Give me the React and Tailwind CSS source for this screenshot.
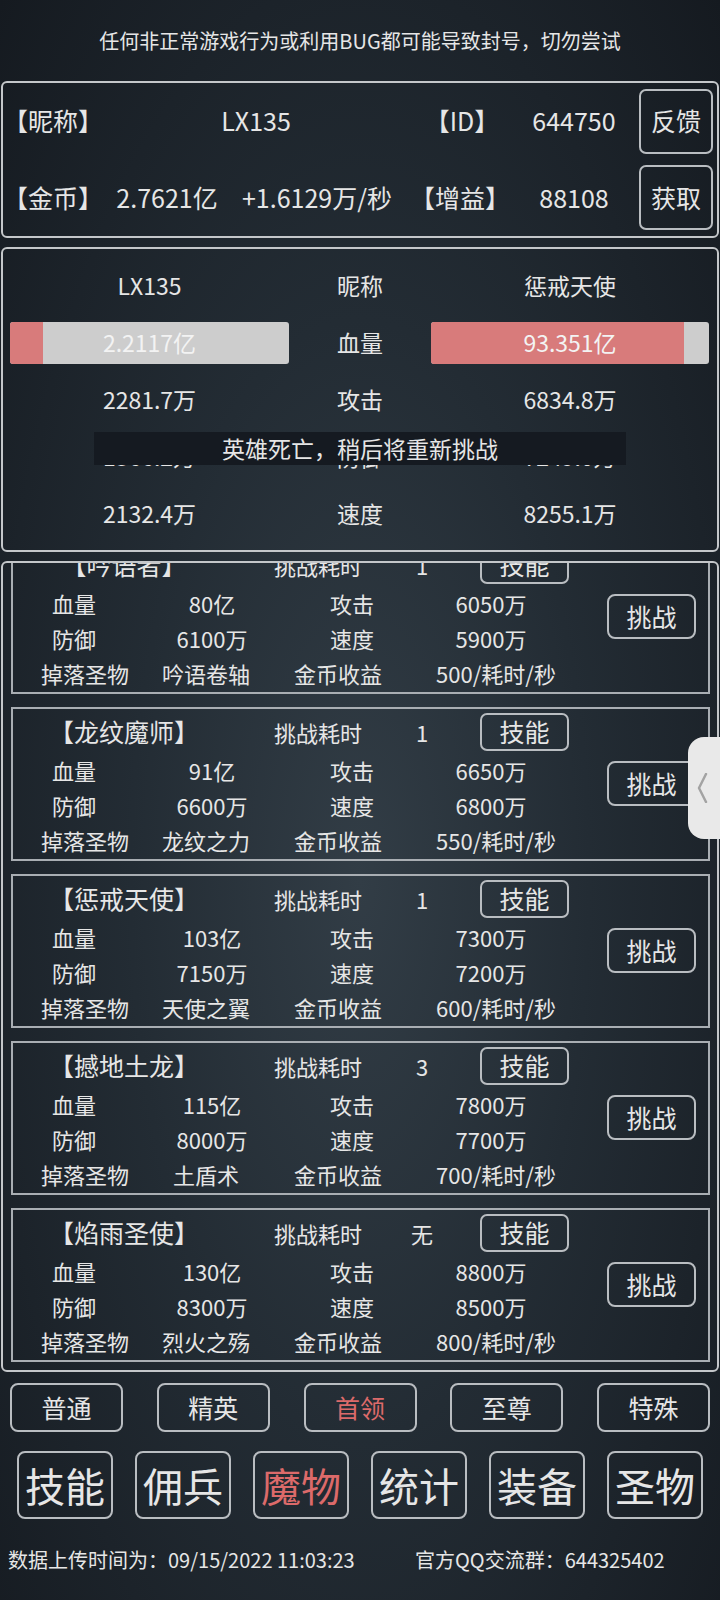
import React from 'react';

const monsters = [
  { name: '【吟语者】', time: '1', hp: '80亿', atk: '6050万', def: '6100万', spd: '5900万', drop: '吟语卷轴', gold: '500/耗时/秒' },
  { name: '【龙纹魔师】', time: '1', hp: '91亿', atk: '6650万', def: '6600万', spd: '6800万', drop: '龙纹之力', gold: '550/耗时/秒' },
  { name: '【惩戒天使】', time: '1', hp: '103亿', atk: '7300万', def: '7150万', spd: '7200万', drop: '天使之翼', gold: '600/耗时/秒' },
  { name: '【撼地土龙】', time: '3', hp: '115亿', atk: '7800万', def: '8000万', spd: '7700万', drop: '土盾术', gold: '700/耗时/秒' },
  { name: '【焰雨圣使】', time: '无', hp: '130亿', atk: '8800万', def: '8300万', spd: '8500万', drop: '烈火之殇', gold: '800/耗时/秒' },
];

const tabs = ['普通', '精英', '首领', '至尊', '特殊'];
const navs = ['技能', '佣兵', '魔物', '统计', '装备', '圣物'];

const MonsterCard = ({ m }) => (
  <div className="h-[154px] shrink-0 border-2 border-[#a9aeb3] flex pt-[2px]">
    <div className="flex flex-col">
      <div className="h-[42px] flex items-center">
        <div className="w-[222px] text-center text-[25px]">{m.name}</div>
        <div className="w-[166px] text-center">挑战耗时</div>
        <div className="w-[42px] text-center">{m.time}</div>
        <div className="ml-[37px] w-[89px] h-[38px] border-2 border-[#b9bdc1] rounded-[7px] flex items-center justify-center text-[25px]">技能</div>
      </div>
      <div className="h-[35px] flex items-center">
        <div className="w-[122px] text-center">血量</div>
        <div className="w-[154px] text-center">{m.hp}</div>
        <div className="w-[126px] text-center">攻击</div>
        <div className="w-[152px] text-center">{m.atk}</div>
      </div>
      <div className="h-[35px] flex items-center">
        <div className="w-[122px] text-center">防御</div>
        <div className="w-[154px] text-center">{m.def}</div>
        <div className="w-[126px] text-center">速度</div>
        <div className="w-[152px] text-center">{m.spd}</div>
      </div>
      <div className="h-[35px] flex items-center">
        <div className="w-[144px] text-center">掉落圣物</div>
        <div className="w-[98px] text-center">{m.drop}</div>
        <div className="w-[166px] text-center">金币收益</div>
        <div className="w-[150px] text-center">{m.gold}</div>
      </div>
    </div>
    <div className="ml-auto mr-[12px] mt-[50px]">
      <div className="w-[89px] h-[45px] border-2 border-[#b9bdc1] rounded-[8px] flex items-center justify-center text-[25px]">挑战</div>
    </div>
  </div>
);

const HpBar = ({ value, pct }) => (
  <div className="relative w-full h-[42px] bg-[#cdcdcd] rounded-[3px] overflow-hidden">
    <div className="absolute inset-y-0 left-0 bg-[#d87b7b]" style={{ width: pct + '%' }} />
    <div className="relative h-full flex items-center justify-center text-[#f3f3f3]">{value}</div>
  </div>
);

export default function App() {
  return (
    <div className="relative w-[720px] h-[1600px] overflow-hidden text-[#e6e6e6] font-['Noto_Sans_CJK_SC','Noto_Sans',sans-serif] bg-[radial-gradient(ellipse_at_50%_55%,#323d46_0%,#232c34_45%,#151a20_100%)]">
      {/* notice */}
      <div className="h-[81px] flex items-center justify-center text-[20px]">任何非正常游戏行为或利用BUG都可能导致封号，切勿尝试</div>

      {/* player info */}
      <div className="mx-[1px] h-[157px] border-2 border-[#c4c7ca] rounded-[6px] text-[25px]">
        <div className="h-[76px] flex items-center">
          <div className="w-[97px]">【昵称】</div>
          <div className="w-[312px] text-center">LX135</div>
          <div className="w-[100px] text-center">【ID】</div>
          <div className="w-[124px] text-center">644750</div>
          <div className="ml-auto mr-[4px] w-[74px] h-[65px] border-2 border-[#b9bdc1] rounded-[7px] flex items-center justify-center">反馈</div>
        </div>
        <div className="h-[77px] flex items-center">
          <div className="w-[97px]">【金币】</div>
          <div className="w-[134px] text-center">2.7621亿</div>
          <div className="w-[166px] text-center">+1.6129万/秒</div>
          <div className="w-[120px] text-center">【增益】</div>
          <div className="w-[108px] text-center">88108</div>
          <div className="ml-auto mr-[4px] w-[74px] h-[65px] border-2 border-[#b9bdc1] rounded-[7px] flex items-center justify-center">获取</div>
        </div>
      </div>

      {/* battle */}
      <div className="relative mt-[9px] mx-[1px] h-[305px] border-2 border-[#c4c7ca] rounded-[6px] pt-[8px] pl-[7px] pr-[8px] text-[23px]">
        <div className="h-[57px] flex items-center">
          <div className="w-[279px] text-center">LX135</div>
          <div className="w-[142px] text-center">昵称</div>
          <div className="flex-1 text-center">惩戒天使</div>
        </div>
        <div className="h-[57px] flex items-center">
          <div className="w-[279px]"><HpBar value="2.2117亿" pct={12} /></div>
          <div className="w-[142px] text-center">血量</div>
          <div className="flex-1"><HpBar value="93.351亿" pct={91} /></div>
        </div>
        <div className="h-[57px] flex items-center">
          <div className="w-[279px] text-center">2281.7万</div>
          <div className="w-[142px] text-center">攻击</div>
          <div className="flex-1 text-center">6834.8万</div>
        </div>
        <div className="h-[57px] flex items-center">
          <div className="w-[279px] text-center">1366.2万</div>
          <div className="w-[142px] text-center">防御</div>
          <div className="flex-1 text-center">7249.0万</div>
        </div>
        <div className="h-[57px] flex items-center">
          <div className="w-[279px] text-center">2132.4万</div>
          <div className="w-[142px] text-center">速度</div>
          <div className="flex-1 text-center">8255.1万</div>
        </div>
        <div className="absolute left-[91px] top-[183px] w-[532px] h-[33px] bg-[#151a21] flex items-center justify-center">英雄死亡，稍后将重新挑战</div>
      </div>

      {/* monster list */}
      <div className="mt-[9px] mx-[1px] h-[811px] border-2 border-[#c4c7ca] rounded-[6px] overflow-hidden pl-[8px] pr-[7px] text-[22px]">
        <div className="-mt-[23px] flex flex-col gap-[13px]">
          {monsters.map((m) => (
            <MonsterCard key={m.name} m={m} />
          ))}
        </div>
      </div>

      {/* tabs */}
      <div className="mt-[11px] px-[10px] flex justify-between text-[25px]">
        {tabs.map((t) => (
          <div key={t} className={`w-[113px] h-[49px] border-2 border-[#b9bdc1] rounded-[8px] flex items-center justify-center ${t === '首领' ? 'text-[#dc6a6a]' : ''}`}>{t}</div>
        ))}
      </div>

      {/* nav */}
      <div className="mt-[19px] px-[17px] flex gap-[22px] text-[40px]">
        {navs.map((t) => (
          <div key={t} className={`w-[96px] h-[68px] border-2 border-[#b9bdc1] rounded-[8px] flex items-center justify-center ${t === '魔物' ? 'text-[#dc6a6a]' : ''}`}>{t}</div>
        ))}
      </div>

      {/* footer */}
      <div className="mt-[23px] h-[36px] flex items-center text-[20px]">
        <div className="pl-[8px] w-[415px]">数据上传时间为：09/15/2022 11:03:23</div>
        <div>官方QQ交流群：644325402</div>
      </div>

      {/* side handle */}
      <div className="absolute right-0 top-[737px] w-[32px] h-[102px] bg-[#e9e9e9] rounded-l-[16px] flex items-center pl-[9px]">
        <svg width="11" height="30" viewBox="0 0 11 30" fill="none">
          <polyline points="9,1 2,15 9,29" stroke="#a3a3a3" strokeWidth="2.5" strokeLinecap="round" strokeLinejoin="round" />
        </svg>
      </div>
    </div>
  );
}
